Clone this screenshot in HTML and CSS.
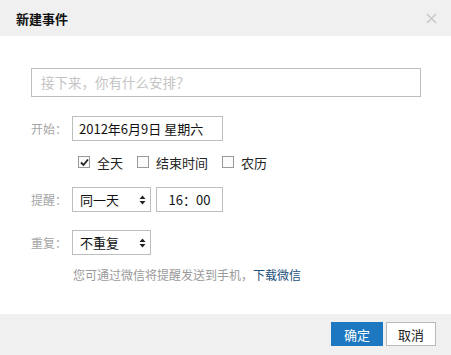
FILE: index.html
```
<!DOCTYPE html>
<html lang="zh">
<head>
<meta charset="utf-8">
<title>新建事件</title>
<link rel="stylesheet" href="styles.css">
</head>
<body>
<div class="dialog">
  <div class="header">
    <span class="title">新建事件</span>
    <svg class="close" width="11" height="11" viewBox="0 0 11 11"><path d="M1 1L10 10M10 1L1 10" stroke="#c9c9c9" stroke-width="1.6" fill="none"/></svg>
  </div>
  <div class="body">
    <div class="subject">接下来，你有什么安排？</div>
    <div class="row row-start">
      <span class="label">开始：</span>
      <div class="box date">2012年6月9日 星期六</div>
    </div>
    <div class="checks">
      <span class="check"><span class="cb on"><svg width="9" height="9" viewBox="0 0 9 9"><path d="M1 4.5L3.5 7L8 1.5" stroke="#222" stroke-width="1.8" fill="none"/></svg></span>全天</span>
      <span class="check"><span class="cb"></span>结束时间</span>
      <span class="check"><span class="cb"></span>农历</span>
    </div>
    <div class="row row-remind">
      <span class="label">提醒：</span>
      <div class="box select">同一天<svg class="arrows" width="7" height="10" viewBox="0 0 7 10"><path d="M3.5 0.5L6.5 4H0.5Z M3.5 9.5L6.5 6H0.5Z" fill="#222"/></svg></div>
      <div class="box time">16：00</div>
    </div>
    <div class="row row-repeat">
      <span class="label">重复：</span>
      <div class="box select">不重复<svg class="arrows" width="7" height="10" viewBox="0 0 7 10"><path d="M3.5 0.5L6.5 4H0.5Z M3.5 9.5L6.5 6H0.5Z" fill="#222"/></svg></div>
    </div>
    <div class="info">您可通过微信将提醒发送到手机，<a class="link">下载微信</a></div>
  </div>
  <div class="footer">
    <button class="btn primary">确定</button>
    <button class="btn">取消</button>
  </div>
</div>
</body>
</html>
```
FILE: styles.css
```
html, body {
  margin: 0;
  padding: 0;
  background: #fff;
}
body {
  font-family: "Noto Sans CJK SC", "Liberation Sans", sans-serif;
  font-size: 12px;
  color: #222;
}
.dialog {
  width: 451px;
  height: 355px;
  display: flex;
  flex-direction: column;
  background: #fff;
}
.header {
  height: 36px;
  background: #f0f0f0;
  display: flex;
  align-items: center;
  justify-content: space-between;
  padding: 0 14px 0 16px;
  flex: none;
}
.title {
  font-size: 13px;
  font-weight: bold;
  color: #111;
}
.close {
  display: block;
}
.body {
  padding: 32px 30px 0 31px;
  display: flex;
  flex-direction: column;
}
.subject {
  height: 27px;
  border: 1px solid #bdbdbd;
  font-size: 13.5px;
  color: #c4c4c4;
  line-height: 27px;
  padding-left: 9px;
}
.row {
  display: flex;
  align-items: center;
}
.row-start { margin-top: 19px; }
.row-remind { margin-top: 15px; }
.row-repeat { margin-top: 18px; }
.label {
  width: 41px;
  color: #a5a5a5;
  font-size: 12px;
}
.box {
  height: 23px;
  border: 1px solid #bdbdbd;
  line-height: 23px;
  font-size: 13px;
  color: #111;
  box-sizing: content-box;
}
.date {
  width: 143px;
  padding-left: 6px;
}
.select {
  width: 66px;
  padding-left: 7px;
  padding-right: 4px;
  box-sizing: border-box;
  height: 25px;
  display: flex;
  align-items: center;
  justify-content: space-between;
}
.select.box { width: 79px; }
.arrows { display: block; }
.time {
  width: 65px;
  margin-left: 5px;
  text-align: center;
}
.checks {
  margin-top: 11px;
  height: 20px;
  display: flex;
  align-items: center;
  padding-left: 47px;
  gap: 14px;
  font-size: 13px;
}
.check {
  display: flex;
  align-items: center;
  gap: 7px;
}
.cb {
  width: 10px;
  height: 10px;
  border: 1px solid #9a9a9a;
  background: #fbfbfb;
  display: flex;
  align-items: center;
  justify-content: center;
}
.info {
  margin-top: 10px;
  line-height: 20px;
  padding-left: 42px;
  color: #9a9a9a;
  font-size: 12px;
}
.link {
  color: #1d4f7c;
}
.footer {
  margin-top: auto;
  height: 41px;
  background: #f0f0f0;
  display: flex;
  justify-content: flex-end;
  align-items: flex-start;
  padding: 8px 15px 0 0;
  gap: 3px;
  box-sizing: border-box;
  flex: none;
}
.btn {
  height: 24px;
  width: 50px;
  border: 1px solid #b9b9b9;
  background: #fff;
  font-family: inherit;
  font-size: 13px;
  color: #222;
  padding: 0;
}
.btn.primary {
  width: 52px;
  background: #1d78c1;
  border-color: #1d78c1;
  color: #fff;
}
```
